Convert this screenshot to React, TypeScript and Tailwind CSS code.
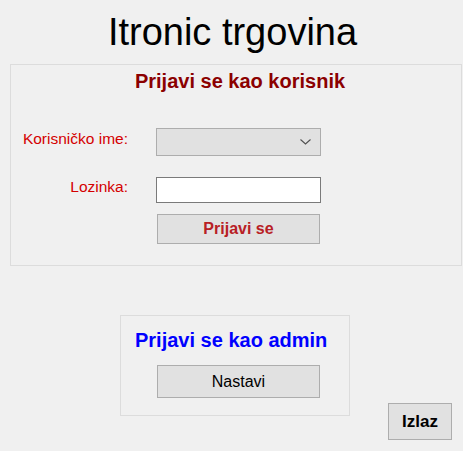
import React from 'react';

// WinForms-like login window

const Chevron: React.FC = () => (
  <svg width="11" height="6" viewBox="0 0 11 6" className="block">
    <polyline points="0.5,0.5 5.5,5 10.5,0.5" fill="none" stroke="#505050" strokeWidth="1.1" />
  </svg>
);

export default function App() {
  return (
    <div className="w-[463px] h-[451px] bg-[#f0f0f0] flex flex-col font-['Liberation_Sans',Arial,sans-serif] overflow-hidden">
      {/* Title */}
      <h1 className="mt-[13px] pl-[2px] text-center text-[38px] leading-none text-black">Itronic trgovina</h1>

      {/* Korisnik group */}
      <div className="mt-[13px] ml-[10px] w-[452px] h-[202px] border border-[#dcdcdc] flex flex-col">
        <h2 className="mt-[6px] pl-[8px] text-center text-[20px] leading-none font-bold text-[#8b0000]">
          Prijavi se kao korisnik
        </h2>

        <div className="mt-[37px] flex items-start">
          <label className="w-[117px] mt-[3px] text-right text-[15.5px] leading-none text-[#d40000]">Korisničko ime:</label>
          <div className="ml-[28px] w-[165px] h-[28px] bg-[#e1e1e1] border border-[#adadad] flex items-center justify-end pr-[9px]">
            <Chevron />
          </div>
        </div>

        <div className="mt-[21px] flex items-start">
          <label className="w-[117px] mt-[2px] text-right text-[15.5px] leading-none text-[#d40000]">Lozinka:</label>
          <input
            type="password"
            className="ml-[28px] w-[165px] h-[26px] bg-white border border-[#7a7a7a] outline-none"
          />
        </div>

        <button className="mt-[11px] ml-[146px] w-[163px] h-[30px] bg-[#e1e1e1] border border-[#adadad] text-[16px] font-bold text-[#b82025] leading-none">
          Prijavi se
        </button>
      </div>

      {/* Admin + Izlaz */}
      <div className="mt-[49px] flex items-start">
        <div className="ml-[120px] w-[230px] h-[101px] border border-[#dcdcdc] flex flex-col">
          <h2 className="mt-[14px] pl-[14px] text-[20px] leading-none font-bold text-[#0000ff]">Prijavi se kao admin</h2>
          <button className="mt-[15px] ml-[36px] w-[163px] h-[33px] bg-[#e1e1e1] border border-[#adadad] text-[16px] text-black leading-none">
            Nastavi
          </button>
        </div>
        <button className="mt-[88px] ml-auto mr-[11px] w-[64px] h-[37px] bg-[#e1e1e1] border border-[#adadad] text-[17px] font-bold text-black leading-none">
          Izlaz
        </button>
      </div>
    </div>
  );
}
